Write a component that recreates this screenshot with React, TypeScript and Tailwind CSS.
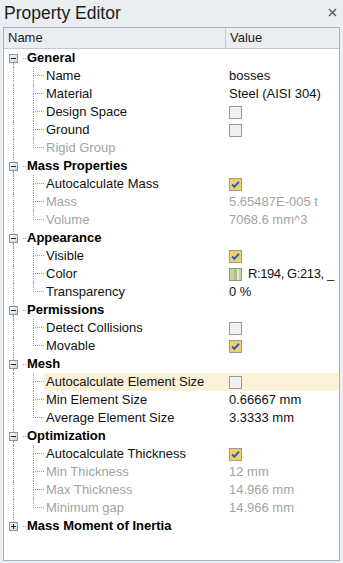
import React from "react"

type Item = { label: string; value?: string; kind?: "text" | "check" | "uncheck" | "color"; disabled?: boolean; highlight?: boolean }
type Group = { title: string; open: boolean; items: Item[] }

const GROUPS: Group[] = [
    {
        title: "General", open: true, items: [
            { label: "Name", value: "bosses" },
            { label: "Material", value: "Steel (AISI 304)" },
            { label: "Design Space", kind: "uncheck" },
            { label: "Ground", kind: "uncheck" },
            { label: "Rigid Group", disabled: true },
        ]
    },
    {
        title: "Mass Properties", open: true, items: [
            { label: "Autocalculate Mass", kind: "check" },
            { label: "Mass", value: "5.65487E-005 t", disabled: true },
            { label: "Volume", value: "7068.6 mm^3", disabled: true },
        ]
    },
    {
        title: "Appearance", open: true, items: [
            { label: "Visible", kind: "check" },
            { label: "Color", value: "R:194, G:213, _", kind: "color" },
            { label: "Transparency", value: "0 %" },
        ]
    },
    {
        title: "Permissions", open: true, items: [
            { label: "Detect Collisions", kind: "uncheck" },
            { label: "Movable", kind: "check" },
        ]
    },
    {
        title: "Mesh", open: true, items: [
            { label: "Autocalculate Element Size", kind: "uncheck", highlight: true },
            { label: "Min Element Size", value: "0.66667 mm" },
            { label: "Average Element Size", value: "3.3333 mm" },
        ]
    },
    {
        title: "Optimization", open: true, items: [
            { label: "Autocalculate Thickness", kind: "check" },
            { label: "Min Thickness", value: "12 mm", disabled: true },
            { label: "Max Thickness", value: "14.966 mm", disabled: true },
            { label: "Minimum gap", value: "14.966 mm", disabled: true },
        ]
    },
    { title: "Mass Moment of Inertia", open: false, items: [] },
]

function Expander({ open }: { open: boolean }) {
    return (
        <svg width="9" height="9" viewBox="0 0 9 9" className="block shrink-0">
            <defs>
                <linearGradient id="exp" x1="0" y1="0" x2="1" y2="1">
                    <stop offset="0" stopColor="#ffffff" />
                    <stop offset="1" stopColor="#c9cfd6" />
                </linearGradient>
            </defs>
            <rect x="0.5" y="0.5" width="8" height="8" fill="url(#exp)" stroke="#8d949b" />
            <rect x="2" y="4" width="5" height="1" fill="#222" />
            {!open && <rect x="4" y="2" width="1" height="5" fill="#222" />}
        </svg>
    )
}

function CheckBox({ checked }: { checked: boolean }) {
    return (
        <svg width="13" height="13" viewBox="0 0 13 13" className="block">
            <rect x="0.5" y="0.5" width="12" height="12" fill={checked ? "#f2d068" : "#eef0f2"} stroke="#9a9a9a" />
            {checked && <path d="M3 6.5 L5.3 8.8 L10 3.8" fill="none" stroke="#2a63c8" strokeWidth="2" />}
        </svg>
    )
}

function Swatch() {
    return (
        <svg width="13" height="13" viewBox="0 0 13 13" className="block shrink-0">
            <rect x="0.5" y="0.5" width="12" height="12" fill="#c2d5a0" stroke="#8e9a86" />
            <rect x="5" y="1" width="3" height="11" fill="#aebf8c" />
            <rect x="8" y="1" width="2" height="11" fill="#dde8c8" />
        </svg>
    )
}

function ChildRow({ item, last, rootLine }: { item: Item; last: boolean; rootLine: boolean }) {
    const text = item.disabled ? "text-[#a3a3a3]" : "text-[#111]"
    return (
        <div className="flex h-[18px]">
            <div className="w-[9px] shrink-0" />
            <div className={`w-[20px] shrink-0 ${rootLine ? "border-l border-dotted border-[#9a9a9a]" : ""}`} />
            <div className="w-[11px] shrink-0 flex flex-col">
                <div className="h-[9px] border-l border-b border-dotted border-[#9a9a9a]" />
                {!last && <div className="flex-1 border-l border-dotted border-[#9a9a9a]" />}
            </div>
            <div className={`flex flex-1 min-w-0 ${item.highlight ? "bg-[#fcf0d6]" : ""}`}>
                <div className={`w-[182px] shrink-0 pl-[2px] leading-[18px] whitespace-nowrap ${text}`}>{item.label}</div>
                <div className={`flex-1 min-w-0 pl-[3px] flex items-center gap-[6px] whitespace-nowrap ${text}`}>
                    {item.kind === "check" && <CheckBox checked />}
                    {item.kind === "uncheck" && <CheckBox checked={false} />}
                    {item.kind === "color" && <Swatch />}
                    {item.value && (
                        <span className={`leading-[18px] ${item.kind === "color" ? "tracking-[-0.4px]" : ""}`}>{item.value}</span>
                    )}
                </div>
            </div>
        </div>
    )
}

function GroupRows({ group, first, last }: { group: Group; first: boolean; last: boolean }) {
    return (
        <>
            <div className="flex h-[18px] items-stretch">
                <div className="w-[5px] shrink-0" />
                <div className="w-[9px] shrink-0 flex flex-col items-center">
                    <div className={`flex-1 w-px ${first ? "" : "border-l border-dotted border-[#9a9a9a]"}`} />
                    <Expander open={group.open} />
                    <div className={`flex-1 w-px ${last ? "" : "border-l border-dotted border-[#9a9a9a]"}`} />
                </div>
                <div className="w-[9px] shrink-0 flex items-center">
                    <div className="ml-[5px] w-[3px] border-t border-dotted border-[#9a9a9a]" />
                </div>
                <div className="font-bold text-black leading-[18px] whitespace-nowrap">{group.title}</div>
            </div>
            {group.items.map((it, i) => (
                <ChildRow key={it.label} item={it} last={i === group.items.length - 1} rootLine={!last} />
            ))}
        </>
    )
}

export default function App() {
    return (
        <div className="w-[343px] h-[563px] bg-[#e9eef2] flex flex-col text-[13px]" style={{ fontFamily: '"Liberation Sans", Arial, sans-serif' }}>
            <div className="h-[27px] flex items-center justify-between pl-[4px] pr-[6px] shrink-0">
                <span className="text-[17.5px] text-[#1b1b1b] leading-none">Property Editor</span>
                <svg width="9" height="9" viewBox="0 0 9 9" className="block mb-[2px]">
                    <path d="M1 1 L8 8 M8 1 L1 8" stroke="#555" strokeWidth="1.3" />
                </svg>
            </div>
            <div className="mx-[3px] mb-[2px] flex-1 border border-[#aab3bb] bg-white flex flex-col overflow-hidden">
                <div className="flex h-[21px] shrink-0 bg-[#eaeef2] border-b border-[#c3cad0] text-[#1b1b1b]">
                    <div className="w-[222px] border-r border-[#c3cad0] pl-[4px] leading-[20px]">Name</div>
                    <div className="flex-1 pl-[4px] leading-[20px]">Value</div>
                </div>
                <div className="flex flex-col">
                    {GROUPS.map((g, i) => (
                        <GroupRows key={g.title} group={g} first={i === 0} last={i === GROUPS.length - 1} />
                    ))}
                </div>
            </div>
        </div>
    )
}
